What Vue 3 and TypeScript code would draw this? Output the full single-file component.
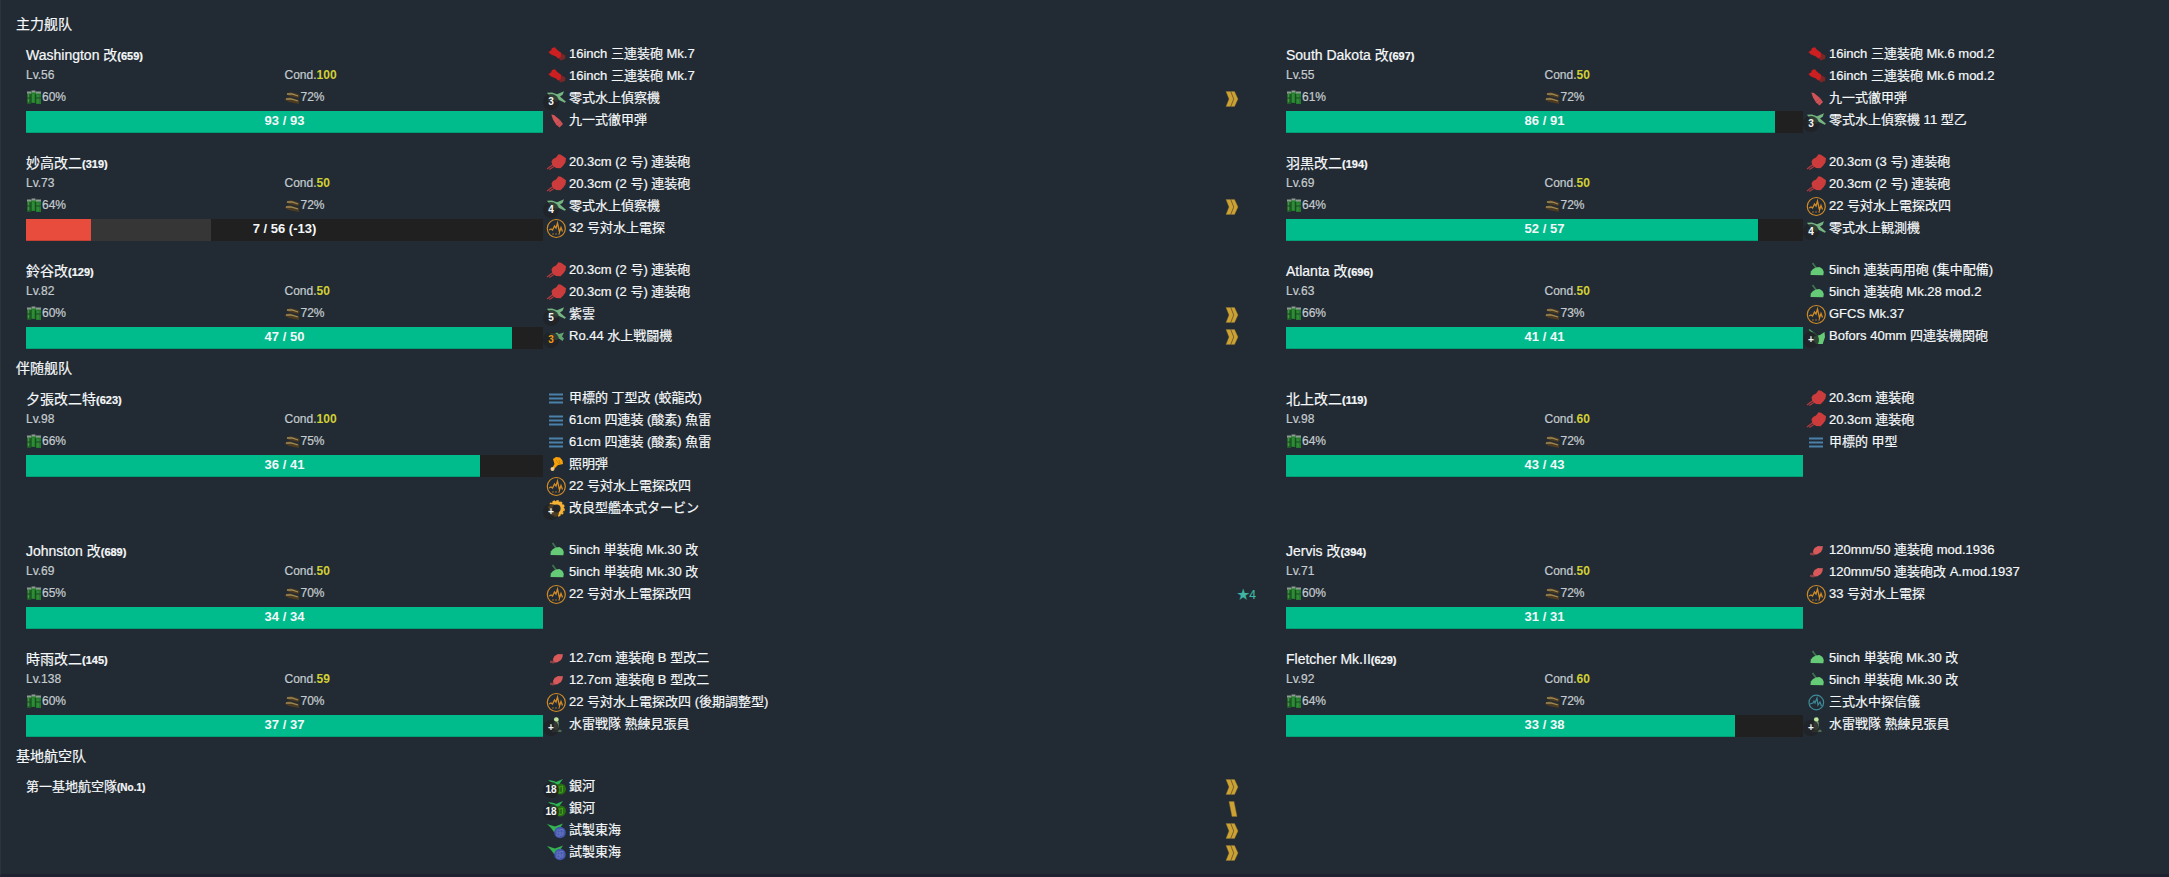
<script setup lang="ts">
type Gear = { icon: string; name: string; badge?: string; warn?: boolean; rank?: string; star?: string }
type Ship = {
  name: string; id: string; base?: boolean
  lv?: number; cond?: number; fuel?: number; ammo?: number
  hp?: number; max?: number; lost?: number
  gear: Gear[]
}
type Fleet = { title: string; rows: Ship[][] }

const g = (icon: string, name: string, badge?: string, extra: Partial<Gear> = {}): Gear => ({ icon, name, badge, ...extra })
const R = { rank: 'double' }

const ship = (
  name: string, id: string, lv: number, cond: number, fuel: number, ammo: number,
  hp: number, max: number, gear: Gear[], lost?: number,
): Ship => ({ name, id, lv, cond, fuel, ammo, hp, max, gear, lost })

const fleets: Fleet[] = [
  {
    title: '主力舰队',
    rows: [
      [
        ship('Washington 改', '659', 56, 100, 60, 72, 93, 93, [
          g('large', '16inch 三連装砲 Mk.7'), g('large', '16inch 三連装砲 Mk.7'),
          g('seaplane', '零式水上偵察機', '3', R), g('shell', '九一式徹甲弾'),
        ]),
        ship('South Dakota 改', '697', 55, 50, 61, 72, 86, 91, [
          g('large', '16inch 三連装砲 Mk.6 mod.2'), g('large', '16inch 三連装砲 Mk.6 mod.2'),
          g('shell', '九一式徹甲弾'), g('seaplane', '零式水上偵察機 11 型乙', '3'),
        ]),
      ],
      [
        ship('妙高改二', '319', 73, 50, 64, 72, 7, 56, [
          g('medium', '20.3cm (2 号) 連装砲'), g('medium', '20.3cm (2 号) 連装砲'),
          g('seaplane', '零式水上偵察機', '4', R), g('radar', '32 号対水上電探'),
        ], 13),
        ship('羽黒改二', '194', 69, 50, 64, 72, 52, 57, [
          g('medium', '20.3cm (3 号) 連装砲'), g('medium', '20.3cm (2 号) 連装砲'),
          g('radar', '22 号対水上電探改四'), g('seaplane', '零式水上観測機', '4'),
        ]),
      ],
      [
        ship('鈴谷改', '129', 82, 50, 60, 72, 47, 50, [
          g('medium', '20.3cm (2 号) 連装砲'), g('medium', '20.3cm (2 号) 連装砲'),
          g('seaplane', '紫雲', '5', R), g('seafighter', 'Ro.44 水上戦闘機', '3', { rank: 'double', warn: true }),
        ]),
        ship('Atlanta 改', '696', 63, 50, 66, 73, 41, 41, [
          g('highangle', '5inch 連装両用砲 (集中配備)'), g('highangle', '5inch 連装砲 Mk.28 mod.2'),
          g('radar', 'GFCS Mk.37'), g('aagun', 'Bofors 40mm 四連装機関砲', '+'),
        ]),
      ],
    ],
  },
  {
    title: '伴随舰队',
    rows: [
      [
        ship('夕張改二特', '623', 98, 100, 66, 75, 36, 41, [
          g('torpedo', '甲標的 丁型改 (蛟龍改)'), g('torpedo', '61cm 四連装 (酸素) 魚雷'),
          g('torpedo', '61cm 四連装 (酸素) 魚雷'), g('flare', '照明弾'),
          g('radar', '22 号対水上電探改四'), g('engine', '改良型艦本式タービン', '+'),
        ]),
        ship('北上改二', '119', 98, 60, 64, 72, 43, 43, [
          g('medium', '20.3cm 連装砲'), g('medium', '20.3cm 連装砲'), g('torpedo', '甲標的 甲型'),
        ]),
      ],
      [
        ship('Johnston 改', '689', 69, 50, 65, 70, 34, 34, [
          g('highangle', '5inch 単装砲 Mk.30 改'), g('highangle', '5inch 単装砲 Mk.30 改'),
          g('radar', '22 号対水上電探改四', undefined, { star: '4' }),
        ]),
        ship('Jervis 改', '394', 71, 50, 60, 72, 31, 31, [
          g('small', '120mm/50 連装砲 mod.1936'), g('small', '120mm/50 連装砲改 A.mod.1937'),
          g('radar', '33 号対水上電探'),
        ]),
      ],
      [
        ship('時雨改二', '145', 138, 59, 60, 70, 37, 37, [
          g('small', '12.7cm 連装砲 B 型改二'), g('small', '12.7cm 連装砲 B 型改二'),
          g('radar', '22 号対水上電探改四 (後期調整型)'), g('lookout', '水雷戦隊 熟練見張員', '+'),
        ]),
        ship('Fletcher Mk.II', '629', 92, 60, 64, 72, 33, 38, [
          g('highangle', '5inch 単装砲 Mk.30 改'), g('highangle', '5inch 単装砲 Mk.30 改'),
          g('sonar', '三式水中探信儀'), g('lookout', '水雷戦隊 熟練見張員', '+'),
        ]),
      ],
    ],
  },
  {
    title: '基地航空队',
    rows: [
      [
        {
          name: '第一基地航空隊', id: 'No.1', base: true,
          gear: [
            g('bomber', '銀河', '18', R), g('bomber', '銀河', '18', { rank: 'single' }),
            g('patrol', '試製東海', undefined, R), g('patrol', '試製東海', undefined, R),
          ],
        },
      ],
    ],
  },
]

const pct = (n: number, max: number) => `${(n / max) * 100}%`
</script>

<template>
  <main class="page">
    <section v-for="fleet in fleets" :key="fleet.title">
      <h2 class="title">{{ fleet.title }}</h2>
      <div v-for="(row, r) in fleet.rows" :key="r" class="row">
        <template v-for="s in row" :key="s.id">
          <article class="info">
            <h3 class="name" :class="{ base: s.base }">{{ s.name }}<small>({{ s.id }})</small></h3>
            <template v-if="!s.base">
              <div class="stats level">
                <span>Lv.{{ s.lv }}</span>
                <span>Cond.<b class="cond">{{ s.cond }}</b></span>
              </div>
              <div class="stats supply">
                <span class="res">
                  <svg viewBox="0 0 16 16" aria-hidden="true">
                    <path d="M1 3h4v11H1z" fill="#286b2d" /><path d="M5 2h5v11H5z" fill="#23802b" /><path d="M10 3h5v11h-5z" fill="#267a2e" />
                    <path d="M2.500 4v9M7 4v8M12 5v8" stroke="#3f9646" />
                    <path d="M5 4v9M9.500 4v9M1 8h4M10 8h5M1 13h4" stroke="#174d20" />
                    <path d="M1 2.500h4M5.500 1.500h4M10 2.500h5" stroke="#8e9c93" stroke-width="2" />
                  </svg>{{ s.fuel }}%
                </span>
                <span class="res">
                  <svg viewBox="0 0 16 16" aria-hidden="true">
                    <path d="M1 4l4-2 8 2 2 2-2 2-9-2zM0 9l4-2 10 3v4l-10-2-4-2z" fill="#4c3b20" />
                    <path d="M2 4h5l6 2M1 9h5l7 2" fill="none" stroke="#a08b58" stroke-width="1.300" />
                  </svg>{{ s.ammo }}%
                </span>
              </div>
              <div class="bar" role="progressbar" :aria-valuenow="s.hp" :aria-valuemax="s.max">
                <div class="fill" :class="{ danger: s.hp! / s.max! <= 0.25 }" :style="{ width: pct(s.hp!, s.max!) }"></div>
                <div v-if="s.lost" class="lost" :style="{ width: pct(s.lost, s.max!) }"></div>
                <span class="hp">{{ s.hp }} / {{ s.max }}<template v-if="s.lost"> (-{{ s.lost }})</template></span>
              </div>
            </template>
          </article>

          <ul class="gear">
            <li v-for="(e, i) in s.gear" :key="i">
              <span class="slot">
                <svg viewBox="0 0 22 22" aria-hidden="true">
                  <g v-if="e.icon === 'large'">
                    <path d="M14 8l6.500 3.500-.5 3.500-4.500 1.500-3-3.500z" fill="#7a2528" />
                    <path d="M3.300 8L6 6.500 7 4l3-.7 2 2.400 4 3-.2 4.300-2.800 1.500-2-2-5-2z" fill="#cb1f21" />
                  </g>
                  <g v-else-if="e.icon === 'medium'">
                    <path d="M2 17l6-4.500M4.300 17.600l6.200-4" stroke="#b13a3e" stroke-width="1.200" />
                    <path d="M8 7l3-1.500L13.500 2.300l2.500.5 5 3.500-.5 4-2 3-3 3-4.500-.3L7.300 13 6.500 9.500z" fill="#cd3c3c" />
                  </g>
                  <g v-else-if="e.icon === 'small'">
                    <path d="M5 12.700h3l3-1v3l-3 .8-3-.8z" fill="#884146" />
                    <path d="M8 11l1.500-3 3.500-2 2.500.3 2.300-.3-.3 3-1.500 3-4 2.400-3.500-1z" fill="#d9595b" />
                  </g>
                  <g v-else-if="e.icon === 'highangle'">
                    <path d="M7.500 3l4 5.500" stroke="#3d7550" stroke-width="1.700" />
                    <path d="M5.500 15l.3-3.500L8 9l3-1.500 3.500-.5 3 2 1.300 3-.5 3.300z" fill="#65cb77" />
                  </g>
                  <g v-else-if="e.icon === 'aagun'">
                    <path d="M4 3.500l8 6" stroke="#479e60" stroke-width="1.500" />
                    <path d="M9 10.500l6-1.500 4.500-3 .5 5-2.300 7H11l-3-4z" fill="#65cb77" />
                  </g>
                  <g v-else-if="e.icon === 'seaplane'" fill="#74b583">
                    <path d="M2 4.700l5-.2 5 1.700 7-3-1.300 3.500-2.700 1.800 6 5.200-1.300 1-6.200-3-3.500.3-5 1.200-3-1 4-2z" />
                    <path d="M8 13l4-3 2 1-2 3z" opacity=".6" />
                  </g>
                  <g v-else-if="e.icon === 'seafighter'" fill="#61a472">
                    <path d="M4 6.500l6 1 2-1 2 1.500 5-1.500-2 4 2 2-1.500 2.500-3.500-2.500-3 1.500L7 14l2-3z" />
                  </g>
                  <g v-else-if="e.icon === 'shell'">
                    <path d="M6.300 4.500L9 5l6 5 3 4-3.500 3.500-3.500-3-3-5z" fill="#d15357" />
                    <path d="M11 14l4-4M13 16l4-4" stroke="#a8494e" stroke-width=".8" />
                  </g>
                  <g v-else-if="e.icon === 'radar'" fill="none" stroke="#d18b26">
                    <circle cx="11.300" cy="10.500" r="9" stroke-width="1.200" />
                    <path d="M4 12l2-1 1.500 1 2-4 1.500 2 1.500-5 2 9L16 9.500l1.500 4" stroke-width="1.300" />
                    <path d="M7 16h8" stroke-dasharray="2 1" stroke-width=".7" />
                  </g>
                  <g v-else-if="e.icon === 'sonar'" fill="none" stroke="#3d899a">
                    <circle cx="11.300" cy="10.500" r="7.300" stroke-width="1.200" />
                    <path d="M5 12l3-1 1-2 1 2 2-5 1 7 2-3 1.500 4" stroke-width="1.200" />
                  </g>
                  <path v-else-if="e.icon === 'torpedo'" d="M4 6.500h14M4 10.500h14M4 14.500h14" stroke="#4981aa" stroke-width="2" />
                  <g v-else-if="e.icon === 'flare'">
                    <path d="M8 5l3-2 4 .5 2.500 3L18 10l-2 .5-3 .5-4 4-1.500-1.500L9.500 10z" fill="#f9a008" />
                    <path d="M11 6l3 4M14 6l1 4" stroke="#b97c18" stroke-width=".7" />
                    <circle cx="7.500" cy="15" r="2" fill="#f5c98d" />
                  </g>
                  <g v-else-if="e.icon === 'engine'" fill="none" stroke="#f7b334">
                    <circle cx="11.500" cy="10.500" r="5.800" stroke-width="3.400" />
                    <circle cx="11.500" cy="10.500" r="7.700" stroke-width="1.400" stroke-dasharray="2.500 1.500" />
                  </g>
                  <g v-else-if="e.icon === 'lookout'">
                    <circle cx="11.300" cy="5.700" r="2.400" fill="#c0e59c" />
                    <path d="M8.500 9l3-2 2 1 .5 5-1.500 3h-3z" fill="#7d9c72" />
                    <path d="M7 16.500h4l4-1 2 1.500-1 1H7z" fill="#546d54" />
                  </g>
                  <g v-else-if="e.icon === 'bomber'">
                    <path d="M3 4l6 1 2 1 7-3-3 4-1 4-6-1-5-1 4-2z" fill="#2db754" />
                    <circle cx="15.500" cy="13" r="5.500" fill="#266e13" />
                    <path d="M12.500 12l5-2v6l-4 1zM14 10v6" fill="none" stroke="#4ba01f" stroke-width=".9" />
                  </g>
                  <g v-else-if="e.icon === 'patrol'">
                    <path d="M2 4l8 2.500 8-3-3 4.500-2 3-4 1-3-4z" fill="#35b34e" />
                    <circle cx="15" cy="12.500" r="5.800" fill="#4257ad" />
                    <path d="M12 10h3v6h-3zM15 9.500h3V15h-3M12 13h6" fill="none" stroke="#7583c8" stroke-width=".7" />
                  </g>
                </svg>
                <span v-if="e.badge" class="badge" :class="{ warn: e.warn }">{{ e.badge }}</span>
              </span>
              <span class="label">{{ e.name }}</span>
              <svg v-if="e.rank" class="rank" viewBox="0 0 14 18" aria-hidden="true">
                <g v-if="e.rank === 'double'" fill="#cda233" stroke="#8a7234" stroke-width=".4">
                  <path d="M1 1.500h4.500L8.500 9l-3 7.500H1L4 9z" />
                  <path d="M6 1.500h3.500L13 9l-3.500 7.500H6L9 9z" />
                </g>
                <path v-else d="M4 1.500h5l3 15H7z" fill="#cda233" stroke="#8a7234" stroke-width=".4" />
              </svg>
              <span class="star"><template v-if="e.star">★{{ e.star }}</template></span>
            </li>
          </ul>
        </template>
      </div>
    </section>
  </main>
</template>

<style>
body {
  margin: 0;
  background: #222b33;
}
</style>

<style scoped>
.page {
  min-height: 100vh;
  box-sizing: border-box;
  padding-top: 14px;
  border-left: 1px solid #2b343d;
  border-bottom: 3px solid #1e2230;
  background: #222b33;
  color: #f5f8fa;
  font-family: "Liberation Sans", "Noto Sans CJK SC", sans-serif;
  font-size: 13px;
  -webkit-text-stroke: 0.2px currentColor;
}
.title {
  margin: 0;
  padding-left: 15px;
  font-size: 14px;
  font-weight: 400;
  line-height: 20px;
}
.row {
  display: grid;
  grid-template-columns: 517fr 743fr 517fr 366fr;
  padding: 10px 0 9px 25px;
}
.name {
  height: 22px;
  margin: 0;
  font-size: 14px;
  font-weight: 400;
  line-height: 22px;
}
.name small {
  font-size: 11px;
  font-weight: 700;
  line-height: 1;
}
.name.base {
  font-size: 13px;
}
.name.base small {
  font-size: 10px;
}
.stats {
  display: grid;
  grid-template-columns: 1fr 1fr;
  color: #c5cbd0;
  font-size: 12px;
}
.level {
  height: 18px;
  line-height: 18px;
}
.supply {
  height: 27px;
  line-height: 27px;
}
.cond {
  color: #d1cf36;
  font-weight: 700;
  -webkit-text-stroke: 0;
}
.res {
  display: flex;
  align-items: center;
}
.res svg {
  width: 16px;
  height: 16px;
}
.bar {
  position: relative;
  display: flex;
  height: 22px;
  background: #202020;
}
.fill {
  background: #00bc8c;
  box-shadow: inset 0 -1px 0 rgba(0, 0, 0, 0.15);
}
.fill.danger {
  background: #e74c3c;
}
.lost {
  background: #363636;
}
.hp {
  position: absolute;
  inset: 0;
  font-weight: 700;
  line-height: 20px;
  text-align: center;
  -webkit-text-stroke: 0;
}
.gear {
  list-style: none;
  margin: 0;
  padding: 0 30px 1px 2px;
}
.gear li {
  display: flex;
  align-items: center;
  height: 22px;
  line-height: 20px;
  white-space: nowrap;
}
.slot {
  position: relative;
  flex: none;
  width: 24px;
  height: 22px;
}
.slot svg {
  display: block;
  width: 22px;
  height: 22px;
}
.badge {
  position: absolute;
  left: -2px;
  top: 6px;
  width: 16px;
  height: 16px;
  border-radius: 8px;
  background: rgba(32, 34, 36, 0.8);
  font-size: 10px;
  font-weight: 700;
  line-height: 16px;
  text-align: center;
  -webkit-text-stroke: 0;
}
.badge.warn {
  color: #f39c12;
}
.label {
  flex: 1;
  padding-bottom: 2px;
}
.rank {
  width: 14px;
  height: 18px;
}
.star {
  display: flex;
  justify-content: flex-end;
  width: 17px;
  color: #3fb5a3;
  font-size: 12px;
}
</style>
